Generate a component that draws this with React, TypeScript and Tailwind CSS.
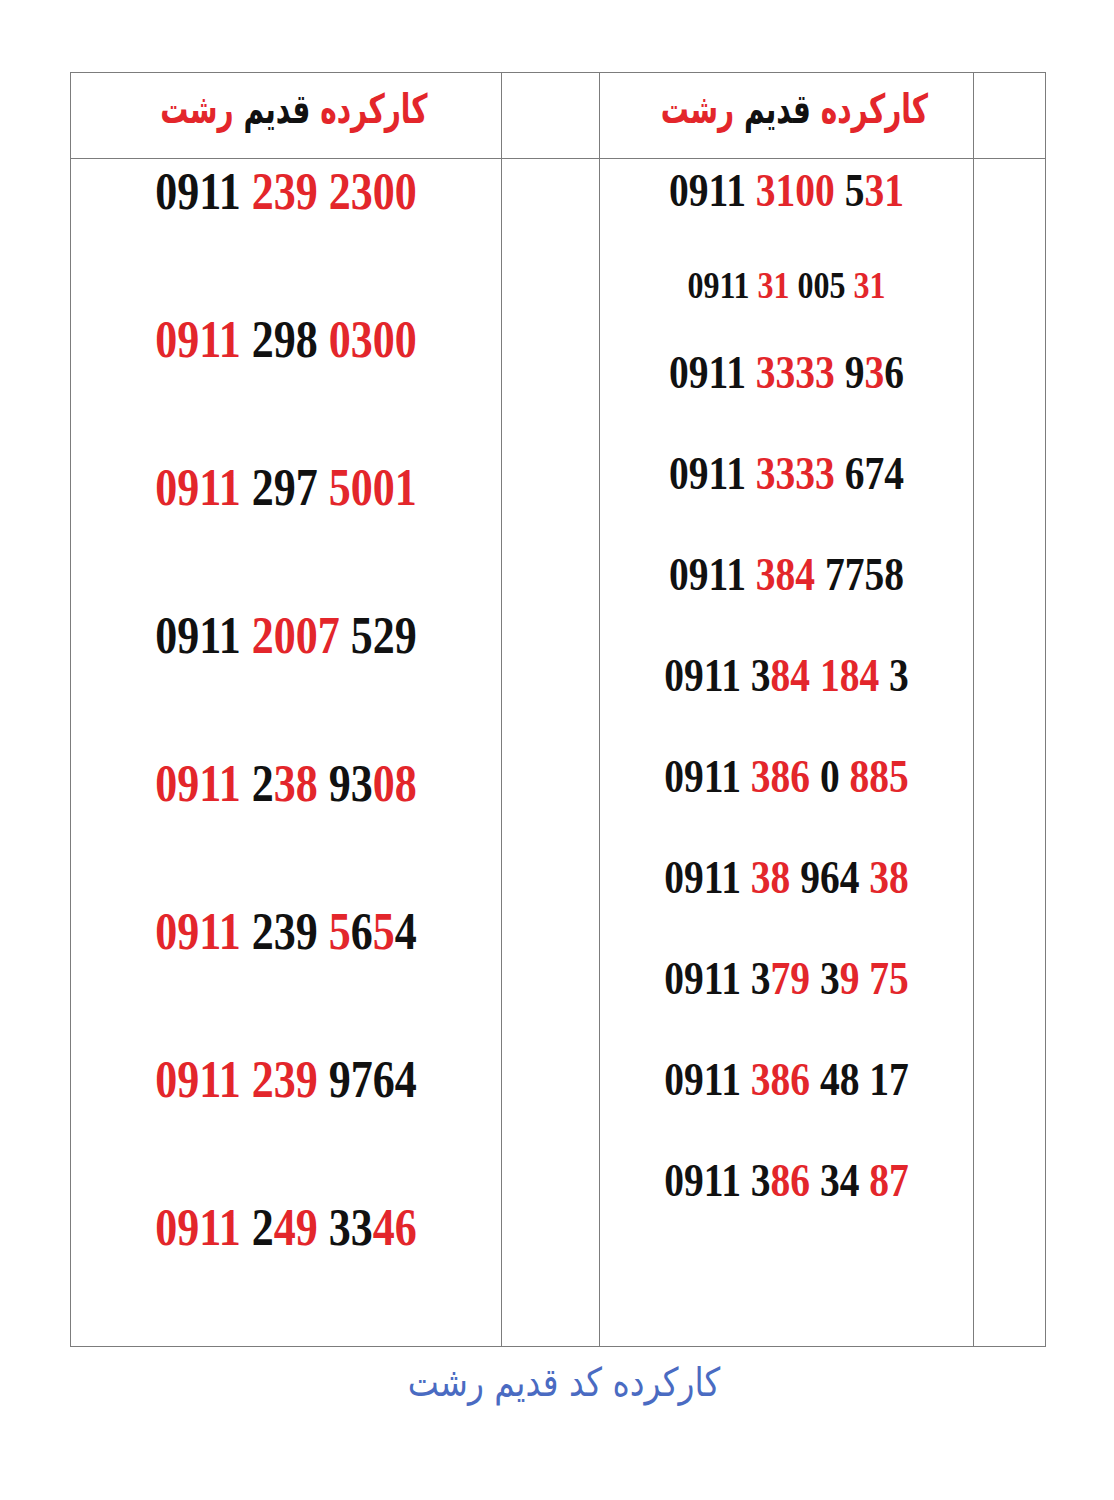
import React from "react";

type Seg = [string, boolean];

const left: Seg[][] = [
  [["0911 ", false], ["239 2300", true]],
  [["0911", true], [" 298 ", false], ["0300", true]],
  [["0911", true], [" 297 ", false], ["5001", true]],
  [["0911 ", false], ["2007", true], [" 529", false]],
  [["0911", true], [" 2", false], ["38", true], [" 93", false], ["08", true]],
  [["0911", true], [" 239 ", false], ["5", true], ["6", false], ["5", true], ["4", false]],
  [["0911 239", true], [" 9764", false]],
  [["0911", true], [" 2", false], ["49", true], [" 33", false], ["46", true]],
];

const right: Seg[][] = [
  [["0911 ", false], ["3100", true], [" 5", false], ["31", true]],
  [["0911 ", false], ["3333", true], [" 9", false], ["3", true], ["6", false]],
  [["0911 ", false], ["3333", true], [" 674", false]],
  [["0911 ", false], ["384", true], [" 7758", false]],
  [["0911 3", false], ["84 184", true], [" 3", false]],
  [["0911 ", false], ["386", true], [" 0 ", false], ["885", true]],
  [["0911 ", false], ["38", true], [" 964 ", false], ["38", true]],
  [["0911 3", false], ["79", true], [" 3", false], ["9 75", true]],
  [["0911 ", false], ["386", true], [" 48 17", false]],
  [["0911 3", false], ["86", true], [" 34 ", false], ["87", true]],
];

const small: Seg[] = [["0911 ", false], ["31", true], [" 005 ", false], ["31", true]];

function Line({ segs }: { segs: Seg[] }) {
  return (
    <>
      {segs.map((s, i) => (
        <span key={i} className={s[1] ? "text-[#e3262b]" : "text-[#111111]"}>
          {s[0]}
        </span>
      ))}
    </>
  );
}

function Header() {
  return (
    <div
      dir="rtl"
      className="text-[28px] font-bold leading-[40px] scale-y-[1.45] [font-family:'DejaVu_Sans',sans-serif]"
    >
      <span className="text-[#e3262b]">کارکرده</span>{" "}
      <span className="text-[#111111]">قدیم</span>{" "}
      <span className="text-[#e3262b]">رشت</span>
    </div>
  );
}

export default function App() {
  return (
    <div className="w-[1114px] h-[1500px] bg-white pt-[72px] pl-[70px] [font-family:'Liberation_Serif',serif]">
      <div className="w-[976px] border border-[#7c7c7c]">
        <div className="grid grid-cols-[431px_98px_374px_1fr] h-[86px] border-b border-[#7c7c7c]">
          <div className="border-r border-[#7c7c7c] flex items-center justify-center pb-[12px] pl-[16px]">
            <Header />
          </div>
          <div className="border-r border-[#7c7c7c]" />
          <div className="border-r border-[#7c7c7c] flex items-center justify-center pb-[12px] pl-[16px]">
            <Header />
          </div>
          <div />
        </div>
        <div className="grid grid-cols-[431px_98px_374px_1fr] h-[1187px]">
          <div className="border-r border-[#7c7c7c] flex flex-col pt-[11px] gap-[104px]">
            {left.map((r, i) => (
              <div
                key={i}
                className="h-[44px] leading-[44px] text-center text-[44px] font-bold whitespace-pre scale-y-[1.18]"
              >
                <Line segs={r} />
              </div>
            ))}
          </div>
          <div className="border-r border-[#7c7c7c]" />
          <div className="border-r border-[#7c7c7c] flex flex-col pt-[9px]">
            <div className="h-[44px] leading-[44px] text-center text-[39.5px] font-bold whitespace-pre scale-y-[1.2]">
              <Line segs={right[0]} />
            </div>
            <div className="mt-[51px] h-[44px] leading-[44px] text-center text-[32px] font-bold whitespace-pre scale-y-[1.2]">
              <Line segs={small} />
            </div>
            <div className="mt-[43px] flex flex-col gap-[57px]">
              {right.slice(1).map((r, i) => (
                <div
                  key={i}
                  className="h-[44px] leading-[44px] text-center text-[39.5px] font-bold whitespace-pre scale-y-[1.2]"
                >
                  <Line segs={r} />
                </div>
              ))}
            </div>
          </div>
          <div />
        </div>
      </div>
      <div
        dir="rtl"
        className="w-[976px] mt-[12px] pl-[12px] text-center text-[33px] leading-[48px] scale-y-[1.2] text-[#4a6bc2] [font-family:'DejaVu_Sans',sans-serif]"
      >
        کارکرده کد قدیم رشت
      </div>
    </div>
  );
}
